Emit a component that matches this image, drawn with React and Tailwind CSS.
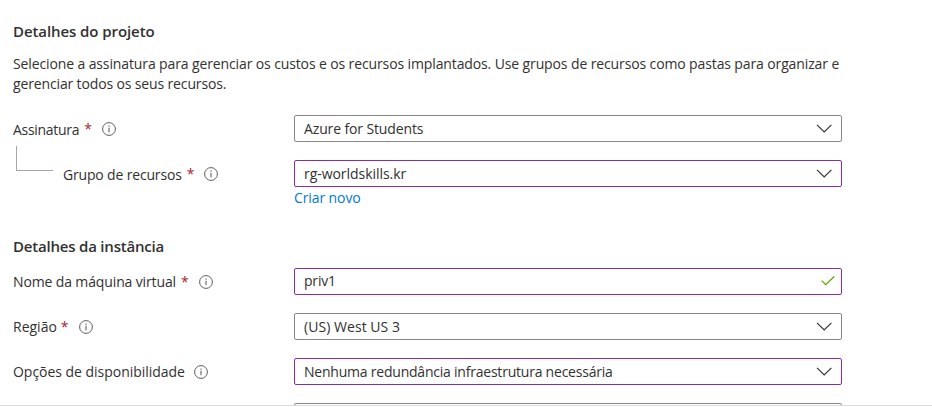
function InfoIcon({ className = '' }) {
  return (
    <svg className={`h-[14px] w-[14px] shrink-0 ${className}`} viewBox="0 0 14 14" fill="none" stroke="#605e5c">
      <circle cx="7" cy="7" r="6.4" strokeWidth="1" />
      <path d="M7 5.8v4.4M7 3.6v1.2" strokeWidth="1.1" />
    </svg>
  );
}

function Chevron() {
  return (
    <svg className="mr-[9px] h-[9px] w-[16px] shrink-0" viewBox="0 0 16 9" fill="none" stroke="#323130" strokeWidth="1.15">
      <path d="M1 0.9L8.2 8L15.4 0.9" />
    </svg>
  );
}

function Check() {
  return (
    <svg className="mr-[6px] mb-px h-[10px] w-[14px] shrink-0" viewBox="0 0 14 10" fill="none" stroke="#57a300" strokeWidth="1.2">
      <path d="M0.7 4.7L4.7 8.7L13.3 0.5" />
    </svg>
  );
}

function Label({ children, required, width = 'w-[281px]', text = '', star = 'ml-[5px]', icon = 'ml-[11px]' }) {
  return (
    <div className={`flex h-[27px] shrink-0 items-center pt-px ${width}`}>
      <span className={`whitespace-nowrap ${text}`}>{children}</span>
      {required && <span className={`w-[7px] font-medium text-[#a4262c] ${star}`}>*</span>}
      <InfoIcon className={icon} />
    </div>
  );
}

function Field({ children, modified, valid, text = '' }) {
  return (
    <div className={`flex h-[27px] w-[548px] shrink-0 items-center justify-between rounded-[2px] border bg-white pl-[9px] ${modified ? 'border-[#8a2da5]' : 'border-[#8a8886]'}`}>
      <span className={`whitespace-nowrap ${text}`}>{children}</span>
      {valid ? <Check /> : <Chevron />}
    </div>
  );
}

export default function App() {
  return (
    <div className="h-[407px] w-[932px] overflow-hidden bg-white font-['Open_Sans','Noto_Sans',sans-serif] text-[14px] leading-[20px] text-[#323130]">
      <main className="h-[406px] overflow-hidden border-b border-[#dcdcdc] pl-[13px] pt-[21px]">
        <h2 className="h-[20px] text-[15px] font-semibold tracking-[-0.08px] whitespace-nowrap"><span>Detalhes do projeto</span></h2>
        <p className="mt-[13px] h-[41px] whitespace-nowrap">
          <span className="tracking-[-0.12px]">Selecione a assinatura para gerenciar os custos e os recursos implantados. Use grupos de recursos como pastas para organizar e</span>
          <br />
          <span className="tracking-[-0.14px]">gerenciar todos os seus recursos.</span>
        </p>
        <div className="mt-[20px] flex">
          <Label required text="pt-px tracking-[-0.3px]">Assinatura</Label>
          <Field text="tracking-[-0.13px]">Azure for Students</Field>
        </div>
        <div className="mt-[4px] flex h-[41px] items-end">
          <div className="ml-[3px] mr-[10px] h-[25px] w-[37px] shrink-0 self-start border-b border-l border-[#a6a6a6]" />
          <Label required text="pt-px tracking-[-0.17px]" icon="ml-[10px]" width="w-[231px]">Grupo de recursos</Label>
          <Field modified text="tracking-[-0.05px]">rg-worldskills.kr</Field>
        </div>
        <a className="ml-[281px] mt-px block tracking-[-0.1px] text-[#0078d4]"><span>Criar novo</span></a>
        <h2 className="mt-[28px] h-[20px] text-[15px] font-semibold tracking-[-0.2px] whitespace-nowrap"><span>Detalhes da instância</span></h2>
        <div className="mt-[12px] flex flex-col gap-[18px]">
          <div className="flex">
            <Label required text="tracking-[-0.13px]">Nome da máquina virtual</Label>
            <Field modified valid text="mb-[2px] tracking-[-0.2px]">priv1</Field>
          </div>
          <div className="flex">
            <Label required star="ml-[4px]">Região</Label>
            <Field text="tracking-[0.05px]">(US) West US 3</Field>
          </div>
          <div className="flex">
            <Label text="tracking-[-0.03px]" icon="ml-[9px]">Opções de disponibilidade</Label>
            <Field modified text="tracking-[-0.22px]">Nenhuma redundância infraestrutura necessária</Field>
          </div>
          <div className="ml-[281px] h-[27px] w-[548px] rounded-[2px] border border-[#8a8886]" />
        </div>
      </main>
    </div>
  );
}
